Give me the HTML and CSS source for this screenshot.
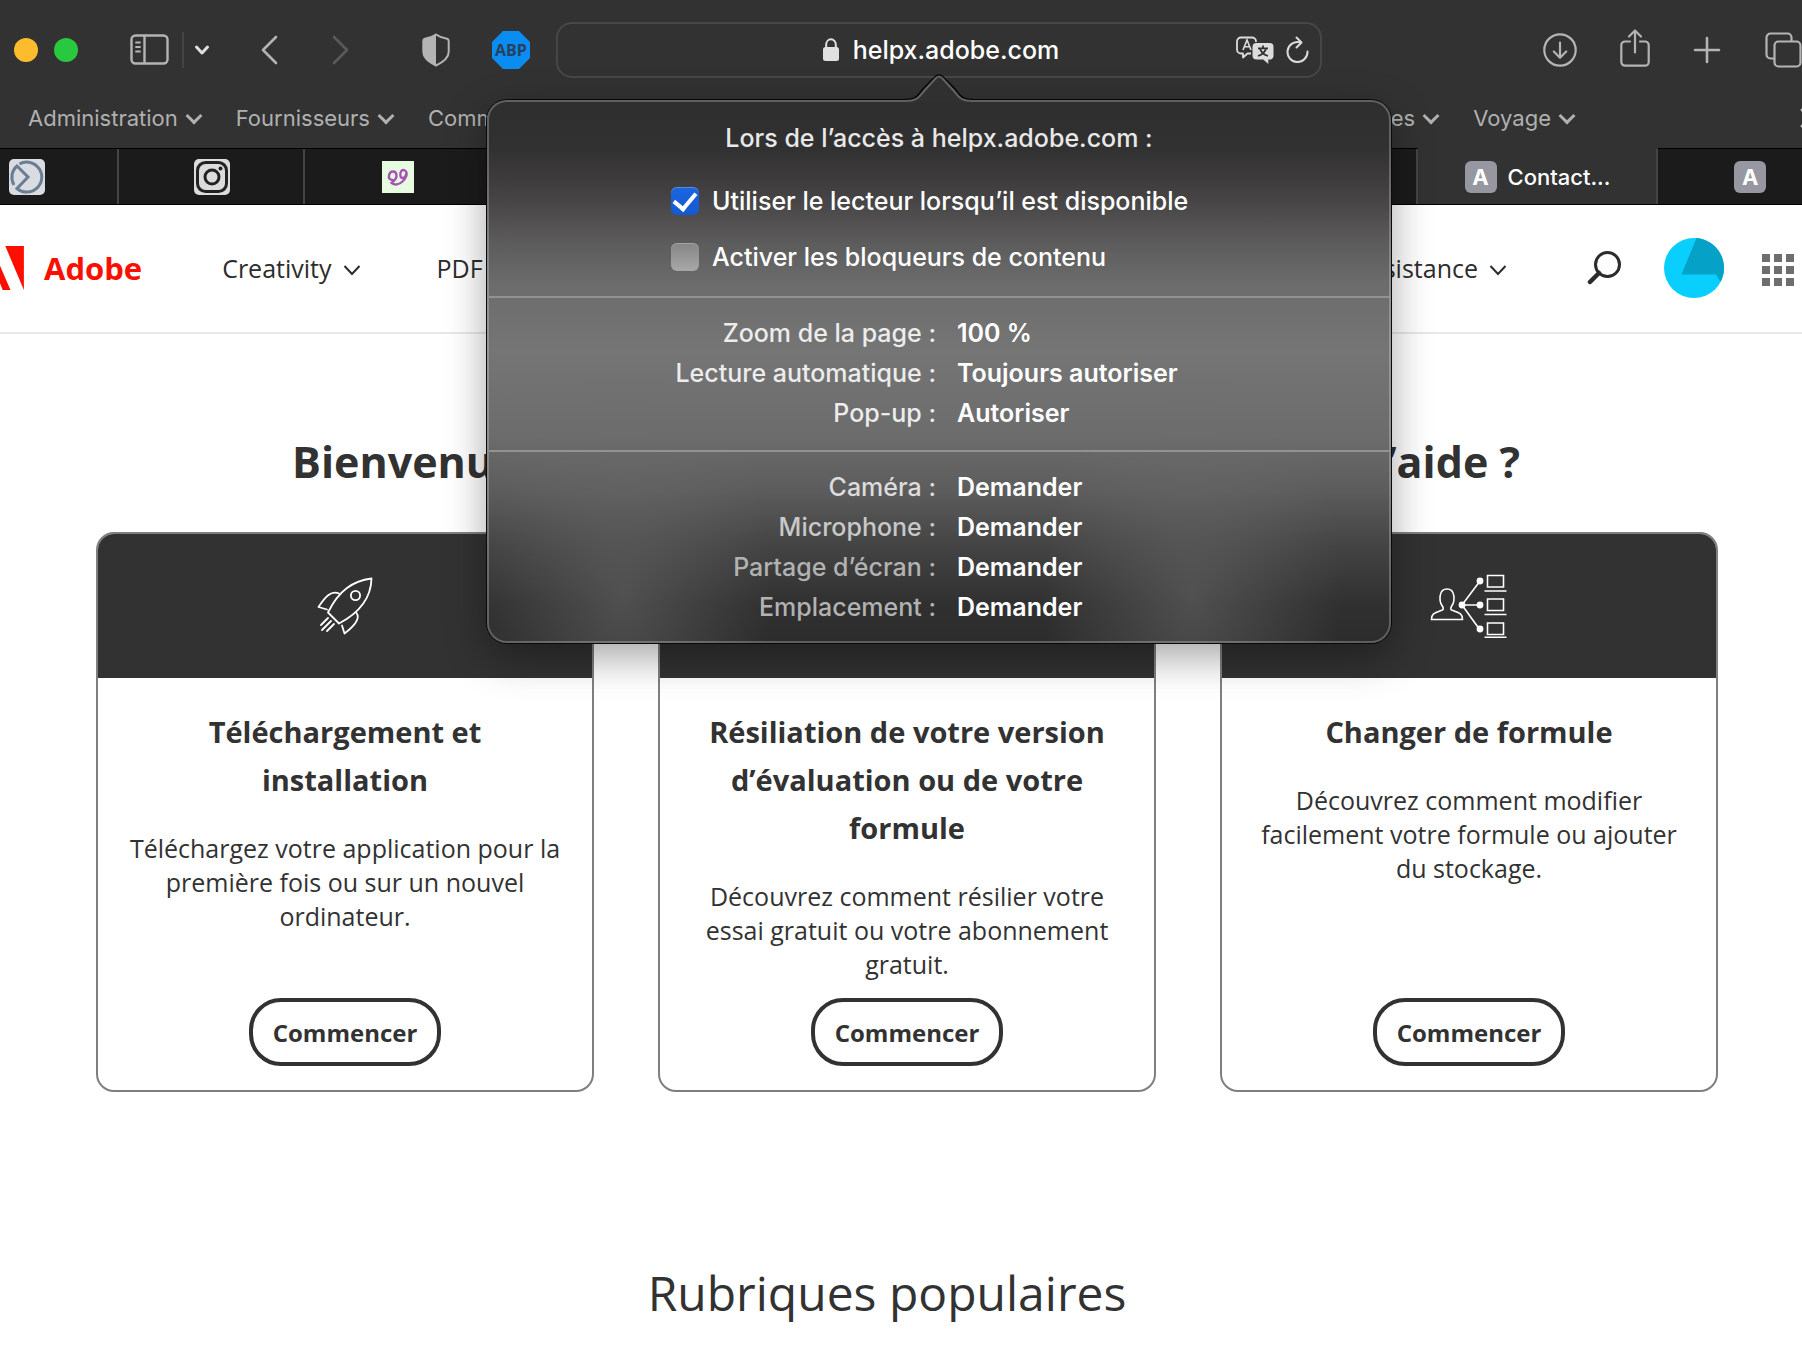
FILE: index.html
```html
<!DOCTYPE html>
<html lang="fr">
<head>
  <meta charset="utf-8">
  <meta name="viewport" content="width=device-width, initial-scale=1">
  <title>Contact - helpx.adobe.com</title>
  <link rel="stylesheet" href="styles.css">
</head>
<body>
  <div class="browser">
    <div class="toolbar">
      <div class="lights">
        <span class="light yellow"></span>
        <span class="light green"></span>
      </div>
      <button class="icon-btn sidebar-btn" aria-label="Barre latérale">
        <svg width="40" height="32" viewBox="0 0 40 32" fill="none" stroke="#b4b4b4" stroke-width="2.4" stroke-linecap="round">
          <rect x="1.5" y="1.5" width="36" height="28" rx="4"/>
          <path d="M14.5 2v27"/>
          <path d="M6 8.500h4M6 13h4M6 17.500h4" stroke-width="1.8"/>
        </svg>
      </button>
      <button class="icon-btn group-btn" aria-label="Groupes d’onglets">
        <svg width="16" height="12" viewBox="0 0 16 12" fill="none" stroke="#e0e0e0" stroke-width="3" stroke-linecap="round" stroke-linejoin="round"><path d="M2.500 3l5.500 6 5.500-6"/></svg>
      </button>
      <button class="icon-btn back-btn" aria-label="Précédent">
        <svg width="18" height="30" viewBox="0 0 18 30" fill="none" stroke="#b4b4b4" stroke-width="2.600" stroke-linecap="round" stroke-linejoin="round"><path d="M16 2L3 15l13 13"/></svg>
      </button>
      <button class="icon-btn forward-btn" aria-label="Suivant">
        <svg width="18" height="30" viewBox="0 0 18 30" fill="none" stroke="#5a5a5a" stroke-width="2.600" stroke-linecap="round" stroke-linejoin="round"><path d="M2 2l13 13L2 28"/></svg>
      </button>
      <button class="icon-btn shield-btn" aria-label="Rapport de confidentialité">
        <svg width="28" height="34" viewBox="0 0 28 34">
          <path d="M14 1.500C10.500 4 6.500 5.200 3 5.800Q1.300 6.200 1.300 8v11c0 6.500 6.500 10.500 12.700 13.500 6.200-3 12.700-7 12.700-13.500V8q0-1.800-1.700-2.200C21.500 5.200 17.500 4 14 1.500z" fill="none" stroke="#b4b4b4" stroke-width="2"/>
          <path d="M14 1.500C10.500 4 6.500 5.200 3 5.800Q1.300 6.200 1.300 8v11c0 6.500 6.500 10.500 12.700 13.500z" fill="#b4b4b4"/>
        </svg>
      </button>
      <button class="icon-btn abp-btn">ABP</button>

      <div class="address">
        <div class="url-field">
          <div class="url">
            <svg width="16" height="24" viewBox="0 0 16 24"><rect y="9" width="16" height="14" rx="2.500" fill="#e0e0e0"/><path d="M3.200 10V6.500a4.800 5.200 0 0 1 9.600 0V10" fill="none" stroke="#e0e0e0" stroke-width="2"/></svg>
            <span>helpx.adobe.com</span>
          </div>
          <div class="url-tools">
            <button class="icon-btn" aria-label="Traduire">
              <svg width="38" height="28" viewBox="0 0 38 28">
                <path d="M15 17.500h-3.500L7 21.500v-4H5a4 4 0 0 1-4-4V5.500a4 4 0 0 1 4-4h11a4 4 0 0 1 4 4V6" fill="none" stroke="#dcdcdc" stroke-width="1.800" stroke-linejoin="round"/>
                <path d="M7 14l4-10 4 10M8.400 10.800h5.200" fill="none" stroke="#dcdcdc" stroke-width="1.600"/>
                <path d="M20.500 7h13a4 4 0 0 1 4 4v8.500a4 4 0 0 1-4 4h-1.200V28l-5-4.500h-6.800a4 4 0 0 1-4-4V11a4 4 0 0 1 4-4z" fill="#dcdcdc"/>
                <path d="M27 9.500v2.500M22 12.300h10M24 12.500c.8 3.500 3.500 6 8 7.500M30 12.500c-.8 3.500-3.500 6-8 7.500" fill="none" stroke="#323232" stroke-width="1.800"/>
              </svg>
            </button>
            <button class="icon-btn" aria-label="Recharger">
              <svg width="24" height="28" viewBox="0 0 24 28" fill="none" stroke="#dcdcdc" stroke-width="2" stroke-linecap="round" stroke-linejoin="round"><path d="M21.500 15.500A10 10 0 1 1 14 6.300"/><path d="M10.500 1.500l5 5-5 5"/></svg>
            </button>
          </div>
        </div>

        <div class="popover">
          <svg class="arrow" width="68" height="29" viewBox="0 0 68 29">
            <path d="M2 29V26C12 26 13 22 18 16L30 3Q34-1 38 3L50 16C55 22 56 26 66 26V29z" fill="#303030"/>
            <path d="M0 25.500C12 25.500 13 21 18 15L30 3Q34-1 38 3L50 15C55 21 56 25.500 68 25.500" fill="none" stroke="#000" stroke-width="1.500"/>
            <path d="M0 27C13 27 14 23 19 17L31 4Q34 1 37 4L49 17C54 23 55 27 68 27" fill="none" stroke="#626262" stroke-width="2"/>
          </svg>
          <div class="section options">
            <p>Lors de l’accès à helpx.adobe.com :</p>
            <div class="check">
              <input type="checkbox" id="reader" checked>
              <label for="reader">Utiliser le lecteur lorsqu’il est disponible</label>
            </div>
            <div class="check">
              <input type="checkbox" id="blockers">
              <label for="blockers">Activer les bloqueurs de contenu</label>
            </div>
          </div>
          <dl class="section">
            <dt>Zoom de la page :</dt><dd>100 %</dd>
            <dt>Lecture automatique :</dt><dd>Toujours autoriser</dd>
            <dt>Pop-up :</dt><dd>Autoriser</dd>
          </dl>
          <dl class="section permissions">
            <dt>Caméra :</dt><dd>Demander</dd>
            <dt>Microphone :</dt><dd>Demander</dd>
            <dt>Partage d’écran :</dt><dd>Demander</dd>
            <dt>Emplacement :</dt><dd>Demander</dd>
          </dl>
        </div>
      </div>

      <div class="actions">
        <button class="icon-btn" aria-label="Téléchargements">
          <svg width="34" height="34" viewBox="0 0 34 34" fill="none" stroke="#b4b4b4" stroke-width="2.200" stroke-linecap="round" stroke-linejoin="round"><circle cx="17" cy="17" r="15.700"/><path d="M17 9.500v15M10.800 18.500l6.200 6.200 6.200-6.200"/></svg>
        </button>
        <button class="icon-btn share-btn" aria-label="Partager">
          <svg width="30" height="38" viewBox="0 0 30 38" fill="none" stroke="#b4b4b4" stroke-width="2.200" stroke-linecap="round" stroke-linejoin="round"><path d="M10 12.500H5a3.700 3.700 0 0 0-3.700 3.700V33A3.700 3.700 0 0 0 5 36.700h20a3.700 3.700 0 0 0 3.700-3.700V16.200A3.700 3.700 0 0 0 25 12.500h-5"/><path d="M15 23.500V1.500M9 7.500l6-6 6 6"/></svg>
        </button>
        <button class="icon-btn" aria-label="Nouvel onglet">
          <svg width="28" height="28" viewBox="0 0 28 28" stroke="#b4b4b4" stroke-width="2.600" stroke-linecap="round"><path d="M14 2v24M2 14h24"/></svg>
        </button>
        <button class="icon-btn" aria-label="Vue des onglets">
          <svg width="38" height="36" viewBox="0 0 38 36" fill="none" stroke="#b4b4b4" stroke-width="2.200"><rect x="10.500" y="9.500" width="26" height="25" rx="4"/><path d="M10 26.500H6.500a4 4 0 0 1-4-4V5.500a4 4 0 0 1 4-4h17a4 4 0 0 1 4 4V9"/></svg>
        </button>
      </div>
    </div>

    <nav class="favorites">
      <a href="#">Administration</a>
      <a href="#">Fournisseurs</a>
      <a href="#">Comm</a>
      <a href="#" class="push">es</a>
      <a href="#">Voyage</a>
      <svg class="more" width="12" height="20" viewBox="0 0 12 20" fill="none" stroke="#b4b4b4" stroke-width="2.400"><path d="M1 1l8 9-8 9"/></svg>
    </nav>

    <div class="tabs">
      <div class="tab">
        <svg width="36" height="36" viewBox="0 0 36 36"><rect width="36" height="36" rx="5" fill="#d9dce0"/><g fill="none" stroke="#6b7d93" stroke-width="3"><path d="M10.500 5A15 15 0 1 1 8 29.500L19 18 8 7A15 15 0 0 0 5 26"/></g></svg>
      </div>
      <div class="tab">
        <svg width="36" height="36" viewBox="0 0 36 36"><rect width="36" height="36" rx="5" fill="#dcdcdc"/><g fill="none" stroke="#222" stroke-width="3"><rect x="3.500" y="3.500" width="29" height="29" rx="8"/><circle cx="18" cy="18" r="7"/></g><circle cx="26.500" cy="9.500" r="2" fill="#222"/></svg>
      </div>
      <div class="tab">
        <svg width="32" height="32" viewBox="0 0 32 32"><rect width="32" height="32" fill="#e6fbdf"/><g fill="none" stroke="#a653b4" stroke-width="2.400" stroke-linecap="round"><path d="M10.500 19c-3 0-4-2-3.500-4.500s2-4 4-4 3.500 1.500 3.500 4.500-1.500 4-5 7c2.500 2.500 8 1.500 11-1.500s4.500-6.500 4-9-4-3.500-5.500-1-.500 6.500 1.500 6.500 3.500-2 4-5"/></g></svg>
      </div>
      <div class="tab"></div>
      <div class="tab"></div>
      <div class="tab"></div>
      <div class="tab"></div>
      <div class="tab"></div>
      <div class="tab active"><span class="letter">A</span>Contact...</div>
      <div class="tab"><span class="letter">A</span></div>
    </div>
  </div>

  <header class="site-header">
    <a href="#" class="logo">
      <svg width="51" height="44" viewBox="0 0 30 26" fill="#fa0f00"><path d="M19 0h11v26zM11.100 0H0v26zM15 9.600L22.100 26h-4.600l-2.100-5.200h-5.200z"/></svg>
      Adobe
    </a>
    <a href="#" class="menu creativity">Creativity
      <svg width="18" height="12" viewBox="0 0 18 12"><path d="M1.500 2L9 10l7.500-8"/></svg>
    </a>
    <a href="#" class="menu">PDF</a>
    <a href="#" class="menu push">sistance
      <svg width="18" height="12" viewBox="0 0 18 12"><path d="M1.500 2L9 10l7.500-8"/></svg>
    </a>
    <button class="icon-btn search" aria-label="Rechercher">
      <svg width="34" height="34" viewBox="0 0 34 34" fill="none" stroke="#2c2c2c" stroke-linecap="round"><circle cx="20.500" cy="13.500" r="12" stroke-width="3"/><path d="M12 22l-9 9" stroke-width="4.500"/></svg>
    </button>
    <button class="icon-btn avatar" aria-label="Profil">
      <svg width="60" height="60" viewBox="0 0 60 60"><circle cx="30" cy="30" r="30" fill="#08cffe"/><path d="M32.500 0A30 30 0 0 1 56.500 44L52 36.500H17.500z" fill="#05a1c6"/></svg>
    </button>
    <button class="icon-btn apps" aria-label="Applications">
      <svg width="32" height="32" viewBox="0 0 32 32" fill="#6e6e6e"><path d="M0 0h8v8H0zM12 0h8v8h-8zM24 0h8v8h-8zM0 12h8v8H0zM12 12h8v8h-8zM24 12h8v8h-8zM0 24h8v8H0zM12 24h8v8h-8zM24 24h8v8h-8z"/></svg>
    </button>
  </header>

  <main>
    <h1><span>Bienvenue</span><span>d’aide ?</span></h1>
    <div class="cards">
      <article class="card">
        <div class="card-head">
          <svg width="56" height="58" viewBox="0 0 56 58" fill="none" stroke="#fff" stroke-width="1.800" stroke-linejoin="round" stroke-linecap="round">
            <path d="M54.500 1.500C36 4 22 13 11 35.500L22 46.500C42 36 54 22 54.500 1.500z"/>
            <circle cx="38.500" cy="18.500" r="4.600"/>
            <path d="M22 16.500C14 13 8 20 1.500 30l8.500 2.500M39.500 36C44 42 36 50 27.500 56.500L25 48.500"/>
            <path d="M11 41L4 48M14 44L5 53M17 47l-7 7"/>
          </svg>
        </div>
        <div class="card-body">
          <h2>Téléchargement et installation</h2>
          <p>Téléchargez votre application pour la première fois ou sur un nouvel ordinateur.</p>
          <button class="start">Commencer</button>
        </div>
      </article>
      <article class="card">
        <div class="card-head"></div>
        <div class="card-body">
          <h2>Résiliation de votre version d’évaluation ou de votre formule</h2>
          <p>Découvrez comment résilier votre essai gratuit ou votre abonnement gratuit.</p>
          <button class="start">Commencer</button>
        </div>
      </article>
      <article class="card">
        <div class="card-head">
          <svg width="78" height="64" viewBox="0 0 78 64" fill="none" stroke="#fff" stroke-width="1.600">
            <path d="M1.500 45.500c0-6 3-6.500 11-9.500 1.500-1 .5-3-.5-4.500-3-4.500-3.500-16.500 5-16.500s8 12 5 16.500c-1 1.500-2 3.500-.5 4.500 8 3 11 3.500 11 9.500z"/>
            <path d="M50 7L32 31l18 25M32 31h18"/>
            <g fill="#fff" stroke="none"><circle cx="32" cy="31" r="3.400"/><circle cx="50" cy="7" r="3.400"/><circle cx="50" cy="31" r="3.400"/><circle cx="50" cy="55" r="3.400"/></g>
            <path d="M57.500 1.500h16v11.500h-16zM54.500 17h22M57.500 25h16v11.500h-16zM54.500 40.500h22M57.500 49h16v11.500h-16z"/>
            <path d="M54.500 63.200h22"/>
          </svg>
        </div>
        <div class="card-body">
          <h2>Changer de formule</h2>
          <p>Découvrez comment modifier facilement votre formule ou ajouter du stockage.</p>
          <button class="start">Commencer</button>
        </div>
      </article>
    </div>
    <h2 class="popular">Rubriques populaires</h2>
  </main>
</body>
</html>
```

FILE: styles.css
```css
/* Base */
* {
  box-sizing: border-box;
}
body {
  margin: 0;
  background-color: #fff;
  color: #323232;
  font-family: "Open Sans", "Noto Sans", sans-serif;
  overflow: hidden;
}
a {
  color: inherit;
  text-decoration: none;
}
svg {
  display: block;
  flex: none;
}
.icon-btn {
  flex: none;
  padding: 0;
  border: 0;
  background: none;
}
.push {
  margin-left: auto;
}

/* Browser chrome */
.browser {
  background-color: #323232;
  font-family: Inter, "Liberation Sans", sans-serif;
}
.toolbar {
  display: flex;
  align-items: center;
  height: 100px;
  padding-left: 14px;
}
.lights {
  display: flex;
  gap: 16px;
}
.light {
  width: 24px;
  height: 24px;
  border-radius: 50%;
}
.yellow {
  background-color: #fdbc2e;
}
.green {
  background-color: #28c83f;
}
.sidebar-btn {
  margin-left: 52px;
}
.group-btn {
  display: flex;
  align-items: center;
  height: 36px;
  margin-left: 12px;
  padding-left: 10px;
  border-left: 2px solid #444;
}
.back-btn {
  margin-left: 50px;
}
.forward-btn {
  margin-left: 54px;
}
.shield-btn {
  margin-left: 72px;
}
.abp-btn {
  width: 38px;
  height: 38px;
  margin-left: 42px;
  background-color: #0a8cf0;
  color: #26415c;
  font-family: "Open Sans", sans-serif;
  font-size: 16px;
  font-weight: 700;
  clip-path: polygon(29% 0, 71% 0, 100% 29%, 100% 71%, 71% 100%, 29% 100%, 0 71%, 0 29%);
}
.address {
  position: relative;
  flex: 1;
  margin: 0 221px 0 26px;
}
.url-field {
  display: flex;
  align-items: center;
  justify-content: center;
  height: 56px;
  border: 2px solid #474747;
  border-radius: 16px;
  color: #fff;
  font-size: 25px;
  font-weight: 500;
}
.url {
  display: flex;
  flex: 1;
  align-items: center;
  justify-content: center;
  gap: 14px;
  padding-left: 88px;
}
.url-tools {
  display: flex;
  align-items: center;
  gap: 12px;
  padding-right: 10px;
}
.actions {
  display: flex;
  align-items: center;
  gap: 43px;
}
.share-btn {
  padding-bottom: 4px;
}
.favorites {
  display: flex;
  align-items: center;
  gap: 34px;
  height: 48px;
  padding: 0 0 12px 28px;
  color: #b0b0b0;
  font-size: 22px;
}
.favorites a {
  display: flex;
  align-items: center;
}
.favorites a::after {
  content: "";
  width: 9px;
  height: 9px;
  margin: 0 2px 4px 10px;
  border: solid #b0b0b0;
  border-width: 0 3px 3px 0;
  transform: rotate(45deg);
}
.more {
  margin: 0 -10px 0 191px;
}
.tabs {
  display: flex;
  height: 57px;
  margin: 0 -41px 0 -66px;
}
.tab {
  display: flex;
  flex: 1;
  align-items: center;
  justify-content: center;
  gap: 11px;
  border: solid #000;
  border-width: 1px 0;
  background-color: #1b1b1b;
  box-shadow: inset -2px 0 #454545;
  color: #fff;
  font-size: 22px;
  font-weight: 500;
}
.tab.active {
  flex: 0 0 240px;
  border-top-color: #323232;
  background-color: #323232;
}
.letter {
  width: 32px;
  border-radius: 6px;
  background-color: #9797a1;
  font-size: 22px;
  font-weight: 700;
  line-height: 32px;
  text-align: center;
}

/* Site settings popover */
.popover {
  position: absolute;
  z-index: 10;
  top: 78px;
  left: 50%;
  width: 904px;
  transform: translateX(-50%);
  border: 2px solid rgba(255, 255, 255, 0.24);
  border-radius: 20px;
  background:
    radial-gradient(ellipse 150px 250px at 15% 92%, rgba(110, 110, 110, 0.5), transparent),
    radial-gradient(ellipse 150px 250px at 78% 92%, rgba(110, 110, 110, 0.5), transparent),
    linear-gradient(#2e2e2e 0, #323131 9%, #454343 18%, #5c5b5b 26%, #6c6c6c 34%, #757575 46%, #6c6c6c 62%, #5c5c5c 72%, #444 82%, #303030 93%, #2c2c2c);
  background-origin: border-box;
  box-shadow: 0 0 0 1px #0a0a0a, 0 14px 40px rgba(0, 0, 0, 0.36);
  color: #fff;
  font-size: 25px;
  font-weight: 500;
  line-height: 40px;
}
.arrow {
  position: absolute;
  top: -28px;
  left: 50%;
  transform: translateX(-50%);
}
.section {
  margin: 0;
  padding: 15px 0 17px;
  border-top: 2px solid #929292;
}
.options {
  padding: 16px 0 11px;
  border-top: 0;
}
.options p {
  margin: 0 0 15px;
  color: #e8e8e8;
  text-align: center;
}
.check {
  display: flex;
  align-items: center;
  gap: 13px;
  height: 56px;
  padding-left: 182px;
}
.check input {
  appearance: none;
  display: flex;
  align-items: center;
  justify-content: center;
  width: 28px;
  height: 28px;
  margin: 0;
  border-radius: 6px;
  background: linear-gradient(#868686, #a8a8a8);
  box-shadow: inset 0 1px rgba(255, 255, 255, 0.25);
}
.check input:checked {
  background: linear-gradient(#1b66e0, #1459d0);
}
.check input:checked::after {
  content: "";
  width: 10px;
  height: 18px;
  margin-bottom: 4px;
  border: solid #fff;
  border-width: 0 4px 4px 0;
  transform: rotate(40deg);
}
dl.section {
  display: grid;
  grid-template-columns: 447px 1fr;
  column-gap: 21px;
}
dt {
  color: #ececec;
  text-align: right;
}
dd {
  margin: 0;
  font-weight: 600;
}
.permissions {
  padding-bottom: 14px;
}
.permissions dt {
  color: #b2b2b2;
}
.permissions dt:nth-of-type(1) {
  color: #dcdcdc;
}
.permissions dt:nth-of-type(2) {
  color: #c8c8c8;
}

/* Site header */
.site-header {
  display: flex;
  align-items: center;
  height: 129px;
  padding: 0 8px 2px 0;
  border-bottom: 2px solid #e8e8e8;
  color: #2c2c2c;
  font-size: 25px;
}
.logo {
  display: flex;
  align-items: center;
  gap: 20px;
  margin-left: -27px;
  color: #fa0f00;
  font-size: 31px;
  font-weight: 700;
}
.menu {
  display: flex;
  align-items: center;
  gap: 11px;
}
.menu svg {
  margin-top: 4px;
}
.menu path {
  fill: none;
  stroke: #2c2c2c;
  stroke-width: 2;
}
.creativity {
  margin: 0 76px 0 80px;
}
.site-header .push {
  margin-left: auto;
}
.search {
  margin-left: 80px;
}
.avatar {
  margin-left: 43px;
}
.apps {
  margin-left: 38px;
  padding-top: 4px;
}

/* Page content */
main {
  padding: 96px 84px 0 96px;
}
h1 {
  display: flex;
  justify-content: space-between;
  margin: 0;
  padding: 0 198px 0 196px;
  font-size: 43px;
  line-height: 64px;
}
.cards {
  display: grid;
  grid-template-columns: repeat(3, 1fr);
  gap: 64px;
  margin-top: 38px;
}
.card {
  display: flex;
  flex-direction: column;
  min-height: 560px;
  border: 2px solid #7f7f7f;
  border-radius: 18px;
  overflow: hidden;
}
.card-head {
  display: flex;
  align-items: center;
  justify-content: center;
  height: 144px;
  background-color: #323232;
}
.card-body {
  display: flex;
  flex: 1;
  flex-direction: column;
  align-items: center;
  padding: 30px 24px 24px;
  text-align: center;
}
.card h2 {
  margin: 0 0 27px;
  padding: 0 16px;
  font-size: 29px;
  line-height: 48px;
}
.card p {
  margin: 0;
  font-size: 25px;
  line-height: 34px;
}
.start {
  width: 192px;
  height: 68px;
  margin-top: auto;
  padding: 0;
  border: 4px solid #323232;
  border-radius: 32px;
  background-color: #fff;
  color: #323232;
  font-family: inherit;
  font-size: 24px;
  font-weight: 700;
}
.popular {
  margin: 166px 40px 0 0;
  font-size: 48px;
  font-weight: 400;
  line-height: 70px;
  text-align: center;
}
```
